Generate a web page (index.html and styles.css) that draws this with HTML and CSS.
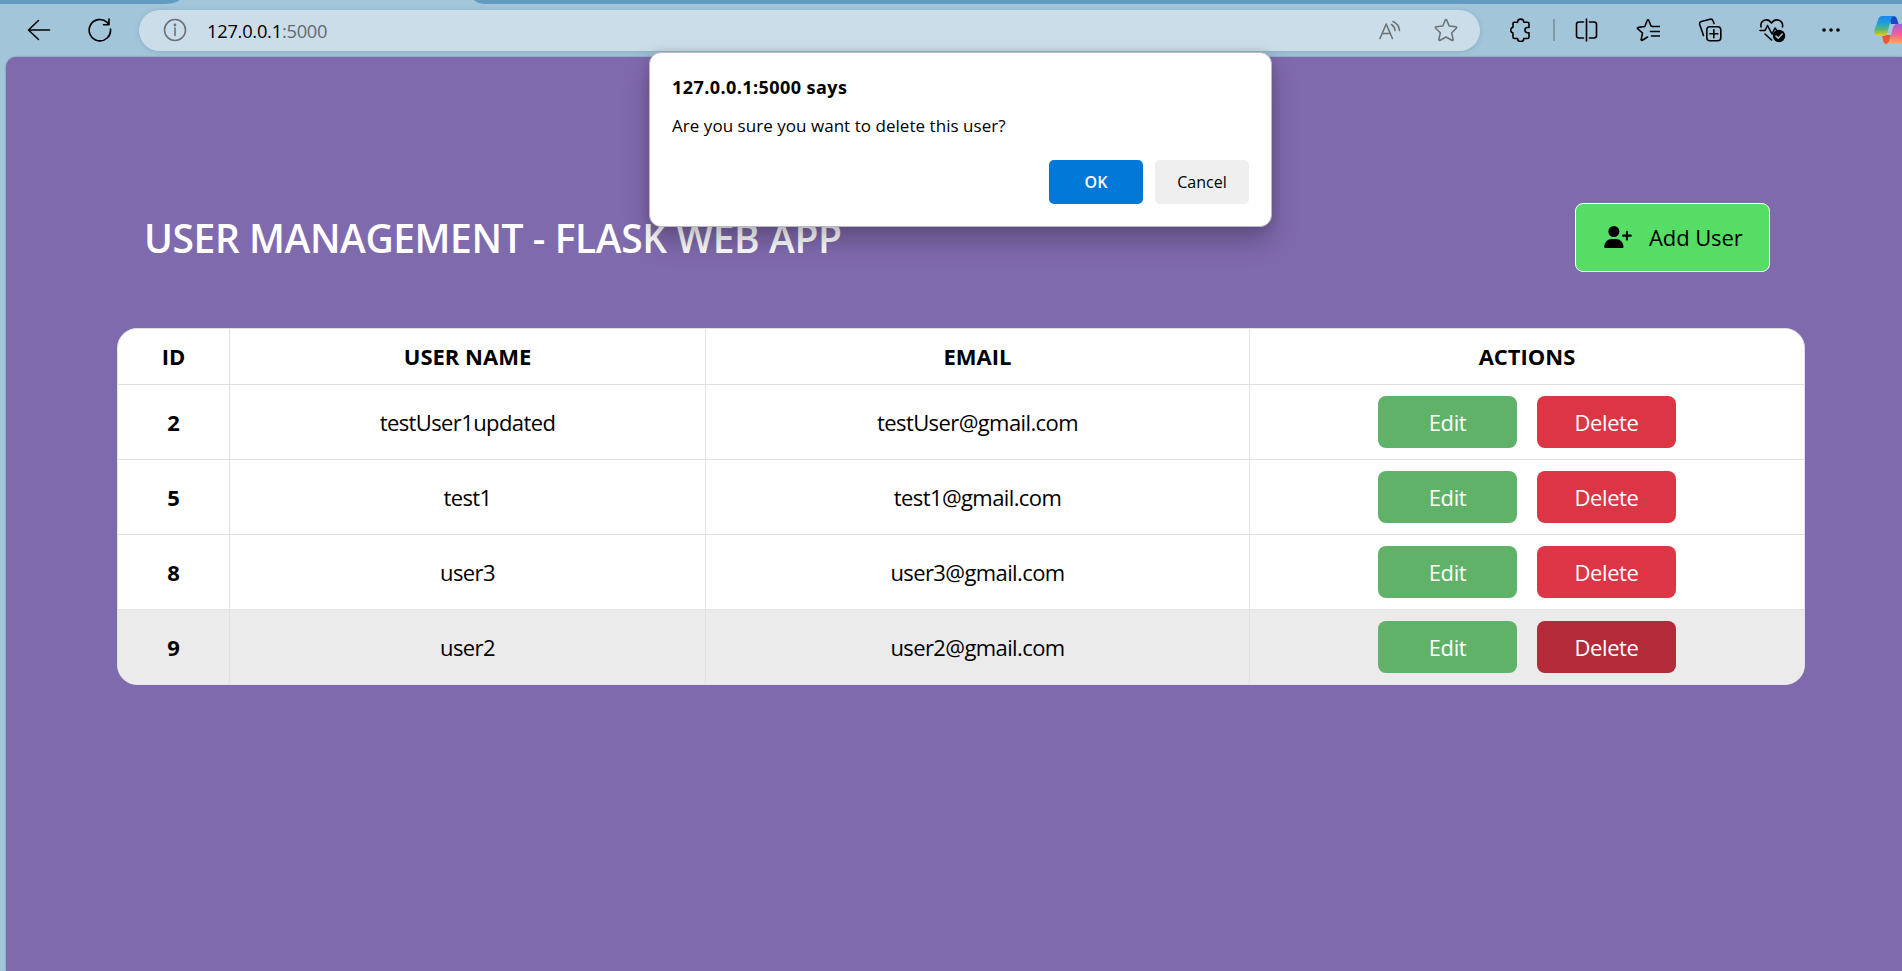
FILE: index.html
```html
<!DOCTYPE html>
<html lang="en">
<head>
<meta charset="utf-8">
<title>User Management - Flask Web App</title>
<link rel="stylesheet" href="styles.css">
</head>
<body>
<div class="window">
  <div class="tabstrip"><svg width="1902" height="4" viewBox="0 0 1902 4"><path d="M165 4Q176 3.500 180 0H474Q477 3.500 485 4Z" fill="#a3c5d9"/></svg></div>
  <header class="toolbar">
    <svg class="ic back" width="24" height="22" viewBox="0 0 24 22"><path d="M1.500 11H22.500M11.500 1.500L1.500 11l10 9.500"/></svg>
    <svg class="ic reload" width="24" height="24" viewBox="0 0 24 24"><path d="M22.500 11a10.700 10.700 0 1 1-3.300-6.600L21 6.500M21 1v5.700h-5.500"/></svg>
    <div class="address">
      <svg class="ic info" width="24" height="24" viewBox="0 0 24 24"><circle cx="12" cy="12" r="10.500"/><path d="M12 10v7.500" /><circle cx="12" cy="7" r=".6"/></svg>
      <span class="url"><span class="host">127.0.0.1</span>:5000</span>
      <svg class="ic read" width="22" height="20" viewBox="0 0 22 20"><path d="M1 18.500L7.200 4l6.200 14.500M3.500 13.500h7.500M12.500 4.500a8 8 0 0 1 3.500 6M14 1.500a11 11 0 0 1 6.500 9"/></svg>
      <svg class="ic star" width="24" height="24" viewBox="0 0 24 24"><path d="M11.200 2.200Q12 .8 12.800 2.200L15.200 8l6.600.8q1.400.4.500 1.500L17.700 14.800l1.400 6.600q0 1.300-1.300.8L12 19l-5.800 3.200q-1.300.5-1.300-.8l1.400-6.600-4.600-4.500q-.9-1.100.5-1.500L8.800 8z"/></svg>
    </div>
    <svg class="ic puzzle" width="22" height="24" viewBox="0 0 22 24"><path d="M5 4.200h3.600a3.100 3.100 0 0 1 6.200 0H18.500q1.500 0 1.500 1.500V9.500h-1.500a2.600 2.600 0 0 0 0 5.200H20v4.300q0 1.500-1.500 1.500h-3.700a3.100 3.100 0 0 1-6.200 0H5.500Q4 20.500 4 19V15a3 3 0 0 1 0-5.800V5.500q0-1.300 1-1.300z"/></svg>
    <span class="divider"></span>
    <svg class="ic split" width="24" height="24" viewBox="0 0 24 24"><path d="M12.500 1v22M9.500 4H5A2.500 2.500 0 0 0 2.500 6.500v11A2.500 2.500 0 0 0 5 20H9.500M15.500 4H20A2.500 2.500 0 0 1 22.500 6.500v11A2.500 2.500 0 0 1 20 20H15.500"/></svg>
    <svg class="ic favs" width="24" height="24" viewBox="0 0 24 24"><path d="M15 8L12.800 2.500Q12 1 11.200 2.500L8.800 8.500l-6.500.9q-1.500.4-.5 1.500L6.500 15l-1.300 6.500q0 1.200 1.200.7L11.500 19M16 8.500h7.500M14.500 13.500h9M15.500 18h8"/></svg>
    <svg class="ic coll" width="24" height="24" viewBox="0 0 24 24"><rect x="8.800" y="8.800" width="14" height="14" rx="3"/><path d="M15.800 11.800v8M11.800 15.800h8M5.500 17.500L1.700 6.500a2.500 2.500 0 0 1 1.700-3L12 1.200a2.500 2.500 0 0 1 3 1.600L16 5.500"/></svg>
    <svg class="ic heart" width="27" height="25" viewBox="0 0 27 25"><path d="M2 9C1 2 8.500-.5 12.500 5 16.500-.5 24.500 2 23.500 9M1 12.500h5l2.500-5 4.500 8.500 3-6 1.500 2M6 16l6.500 6"/><circle cx="20" cy="18" r="6.200" fill="#000" stroke="none"/><path d="M17 18.200l2.200 2 4-4.200" stroke="#a3c5d9"/></svg>
    <svg class="dots" width="20" height="6" viewBox="0 0 20 6"><circle cx="3" cy="3" r="1.800"/><circle cx="10" cy="3" r="1.800"/><circle cx="17" cy="3" r="1.800"/></svg>
    <svg class="copilot" width="28" height="30" viewBox="0 0 28 30">
      <defs>
        <linearGradient id="cool" x1="0" y1="0" x2="0" y2="1"><stop offset="0" stop-color="#1c86e8"/><stop offset=".35" stop-color="#1c9fe0"/><stop offset=".7" stop-color="#5fb86a"/><stop offset="1" stop-color="#f0cf10"/></linearGradient>
        <linearGradient id="warm" x1="0" y1="0" x2="0" y2="1"><stop offset="0" stop-color="#a45ce0"/><stop offset=".5" stop-color="#ef5f9a"/><stop offset="1" stop-color="#ffad50"/></linearGradient>
      </defs>
      <path d="M14 1h5q3 0 4 3l1.500 5H17z" fill="#1748c2"/>
      <path d="M8 20h9l-3 9q-4 1-5-4z" fill="#ee5534"/>
      <path d="M8 1h12q-2.500 1-3.500 5l-3 11q-1 4-4 4H4q-5 0-3.500-6L4 5q1-4 4-4z" fill="url(#cool)"/>
      <path d="M22.500 9H28v20H12q3-1 4-5l3-11.500q1-3.500 3.500-3.500z" fill="url(#warm)"/>
    </svg>
  </header>
  <main class="page">
    <div class="heading">
      <h1>USER MANAGEMENT - FLASK WEB APP</h1>
      <button class="add"><svg width="28" height="22" viewBox="0 0 640 512"><path d="M96 128a128 128 0 1 1 256 0A128 128 0 1 1 96 128zM0 482.300C0 383.800 79.800 304 178.300 304h91.400C368.200 304 448 383.800 448 482.300c0 16.400-13.300 29.700-29.700 29.700H29.700C13.300 512 0 498.700 0 482.300zM504 312V248H440c-13.300 0-24-10.700-24-24s10.700-24 24-24h64V136c0-13.300 10.700-24 24-24s24 10.700 24 24v64h64c13.300 0 24 10.700 24 24s-10.700 24-24 24H552v64c0 13.300-10.700 24-24 24s-24-10.700-24-24z"/></svg><span>Add User</span></button>
    </div>
    <div class="card">
      <table>
        <colgroup><col class="c1"><col class="c2"><col class="c3"><col></colgroup>
        <thead><tr><th>ID</th><th>USER NAME</th><th>EMAIL</th><th>ACTIONS</th></tr></thead>
        <tbody>
          <tr><th>2</th><td>testUser1updated</td><td>testUser@gmail.com</td><td><div class="acts"><button class="edit">Edit</button><button class="del">Delete</button></div></td></tr>
          <tr><th>5</th><td>test1</td><td>test1@gmail.com</td><td><div class="acts"><button class="edit">Edit</button><button class="del">Delete</button></div></td></tr>
          <tr><th>8</th><td>user3</td><td>user3@gmail.com</td><td><div class="acts"><button class="edit">Edit</button><button class="del">Delete</button></div></td></tr>
          <tr class="hover"><th>9</th><td>user2</td><td>user2@gmail.com</td><td><div class="acts"><button class="edit">Edit</button><button class="del pressed">Delete</button></div></td></tr>
        </tbody>
      </table>
    </div>
  </main>
  <div class="dialog">
    <strong>127.0.0.1:5000 says</strong>
    <p>Are you sure you want to delete this user?</p>
    <div class="choices"><button class="ok">OK</button><button class="cancel">Cancel</button></div>
  </div>
</div>
</body>
</html>
```
FILE: styles.css
```css
* { box-sizing: border-box; }
body { margin: 0; font-family: "Open Sans", "Noto Sans", sans-serif; color: #000; }
button { font-family: inherit; border: 0; padding: 0; color: inherit; }
svg { display: block; flex: none; }
.window { position: relative; width: 1902px; height: 971px; overflow: hidden; background: #a3c5d9; display: flex; flex-direction: column; }
.tabstrip { height: 4px; background: #629bc0; flex: none; }
.toolbar { height: 53px; flex: none; display: flex; align-items: center; padding: 0 0 1px 27px; }
.ic { fill: none; stroke: #000; stroke-width: 1.6; stroke-linejoin: round; stroke-linecap: round; }
.reload { margin-left: 37px; }
.address { flex: none; margin-left: 27px; width: 1341px; height: 41px; border-radius: 21px; background: #cadde8; display: flex; align-items: center; padding-left: 24px; box-shadow: 0 1px 5px rgba(70,120,155,.3); }
.address .ic { stroke: #6d7377; }
.url { margin-left: 20px; font-size: 18.300px; color: #63696d; letter-spacing: -.25px; }
.host { color: #000; }
.read { margin-left: auto; }
.star { margin: 0 22px 0 33px; }
.puzzle { margin-left: 29px; }
.divider { flex: none; width: 2px; height: 22px; background: #7e9aaa; margin: 0 19px 0 22px; }
.favs { margin-left: 38px; }
.coll { margin-left: 38px; }
.heart { margin-left: 37px; }
.dots { margin-left: 35px; }
.copilot { margin-left: 33px; }
.page { flex: 1; margin-left: 6px; border-radius: 10px 0 0 0; background: #806aae; padding: 146px 97px 0 111px; box-shadow: 0 0 2px #58758e; }
.heading { display: flex; justify-content: space-between; align-items: center; height: 69px; padding: 0 35px 0 27px; }
h1 { margin: 1px 0 0; font-size: 39px; font-weight: 600; line-height: 48px; color: #fff; letter-spacing: -.43px; white-space: nowrap; }
.add { width: 195px; height: 69px; border: 1px solid #fff; border-radius: 8px; background: #56dd65; display: flex; align-items: center; padding: 0 0 2px 28px; font-size: 22px; font-weight: 500; letter-spacing: -.1px; }
.add span { margin-left: 17px; white-space: nowrap; }
.card { margin-top: 56px; width: 1688px; height: 357px; border: 1px solid #dee2e6; border-radius: 20px; overflow: hidden; background: #fff; }
table { width: 1686px; border-collapse: separate; border-spacing: 0; table-layout: fixed; text-align: center; font-size: 22px; }
.c1 { width: 112px; }
.c2 { width: 476px; }
.c3 { width: 544px; }
th, td { padding: 0 0 1px; height: 75px; border-right: 1px solid #dee2e6; border-bottom: 1px solid #dee2e6; }
td:last-child { padding: 0; }
thead th { height: 56px; padding-bottom: 2px; }
th { font-weight: 700; letter-spacing: 0; }
td { letter-spacing: -.6px; }
tr > :last-child { border-right: 0; }
.hover > * { background: #ebebeb; }
.acts { display: flex; justify-content: center; gap: 20px; }
.acts button { width: 139px; height: 52px; border-radius: 8px; color: #fff; font-size: 22px; letter-spacing: -.4px; padding-bottom: 1px; }
.edit { background: #61b269; }
.del { background: #dc3545; }
.acts .pressed { background: #b32b38; }
.dialog { position: absolute; left: 649px; top: 52px; width: 623px; height: 175px; border: 1px solid #bdb8c8; border-radius: 12px; background: #fff; padding: 21px 22px 0; box-shadow: 0 14px 26px rgba(0,0,0,.25), 0 0 10px rgba(0,0,0,.12); }
.dialog strong { display: block; font-size: 18px; line-height: 26px; letter-spacing: .43px; }
.dialog p { margin: 13px 0 0; font-size: 17px; line-height: 26px; letter-spacing: .04px; }
.choices { display: flex; justify-content: flex-end; gap: 12px; margin-top: 21px; }
.choices button { width: 94px; height: 44px; border-radius: 5px; font-size: 16px; font-weight: 600; }
.ok { background: #0078d7; color: #fff; }
.choices .cancel { background: #efefef; font-weight: 500; }
```
